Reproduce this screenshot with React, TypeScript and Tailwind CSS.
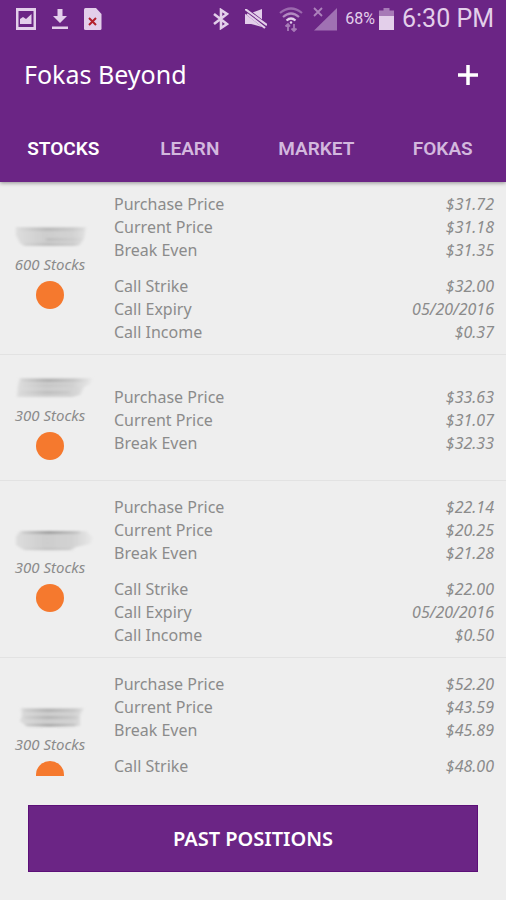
import { useState } from "react";

type Position = {
  stocks: number;
  rows: [string, string][][];
};

const positions: Position[] = [
  {
    stocks: 600,
    rows: [
      [["Purchase Price", "$31.72"], ["Current Price", "$31.18"], ["Break Even", "$31.35"]],
      [["Call Strike", "$32.00"], ["Call Expiry", "05/20/2016"], ["Call Income", "$0.37"]],
    ],
  },
  {
    stocks: 300,
    rows: [
      [["Purchase Price", "$33.63"], ["Current Price", "$31.07"], ["Break Even", "$32.33"]],
    ],
  },
  {
    stocks: 300,
    rows: [
      [["Purchase Price", "$22.14"], ["Current Price", "$20.25"], ["Break Even", "$21.28"]],
      [["Call Strike", "$22.00"], ["Call Expiry", "05/20/2016"], ["Call Income", "$0.50"]],
    ],
  },
  {
    stocks: 300,
    rows: [
      [["Purchase Price", "$52.20"], ["Current Price", "$43.59"], ["Break Even", "$45.89"]],
      [["Call Strike", "$48.00"]],
    ],
  },
];

const tabs = ["STOCKS", "LEARN", "MARKET", "FOKAS"];

// smeared ticker names, one shape per position
const smudges = [
  { shape: "M16 0H86L84 11L80 18L74 19H24L20 16L16 8Z", lines: [[20, 84, 2, 0.16], [46, 84, 12, 0.12], [24, 78, 17, 0.12]] },
  { shape: "M20 0H92L90 6L84 9L80 17L72 19H17L18 8Z", lines: [[22, 88, 2, 0.25], [24, 74, 7, 0.06], [18, 70, 14, 0.12]] },
  { shape: "M20 1H86L93 8L90 14L76 17L70 20H24L16 15V7Z", lines: [[22, 80, 2, 0.4], [24, 74, 19, 0.1]] },
  { shape: "M21 1H84L80 8V19H26L20 14L22 8Z", lines: [[24, 80, 3, 0.22], [24, 78, 10, 0.2], [26, 76, 18, 0.35]] },
];

function Smudge({ index }: { index: number }) {
  const s = smudges[index];
  return (
    <svg width="100" height="20" viewBox="0 0 100 20" className="overflow-visible" aria-hidden="true">
      <defs>
        <filter id={`soft${index}`} x="-20%" y="-50%" width="140%" height="200%">
          <feGaussianBlur stdDeviation="1.8 0.9" />
        </filter>
        <linearGradient id={`fade${index}`} gradientUnits="userSpaceOnUse" x1="14" x2="93" y1="0" y2="0">
          <stop offset="0" stopColor="#dedede" />
          <stop offset="0.4" stopColor="#cdcdcd" />
          <stop offset="0.75" stopColor="#d3d3d3" />
          <stop offset="1" stopColor="#e9e9e9" />
        </linearGradient>
        <linearGradient id={`line${index}`} gradientUnits="userSpaceOnUse" x1="16" x2="90" y1="0" y2="0">
          <stop offset="0" stopColor="#555" stopOpacity="0" />
          <stop offset="0.45" stopColor="#555" />
          <stop offset="1" stopColor="#555" stopOpacity="0" />
        </linearGradient>
      </defs>
      <g filter={`url(#soft${index})`}>
        <path d={s.shape} fill={`url(#fade${index})`} />
        {s.lines.map(([x1, x2, y, o]) => (
          <rect key={y} x={x1} y={y - 1} width={x2 - x1} height="3" fill={`url(#line${index})`} opacity={o} />
        ))}
      </g>
    </svg>
  );
}

function StatusBar() {
  return (
    <div className="h-[38px] flex items-center justify-between pl-4 pr-3 text-[#e3cfea] font-[Roboto,sans-serif]">
      <div className="flex items-center gap-4">
        <svg width="20" height="22" viewBox="0 0 20 22" fill="currentColor">
          <path fillRule="evenodd" d="M0 0H20V22H0ZM2.500 3V19H17.500V3Z" />
          <path d="M4 16V11L7 9L10 11L15.500 6V16Z" />
        </svg>
        <svg width="16" height="20" viewBox="0 0 16 20" fill="currentColor">
          <path d="M5.500 0H10.500V7H15L8 14L1 7H5.500ZM0 17.500H16V20H0Z" />
        </svg>
        <svg width="18" height="22" viewBox="0 0 18 22">
          <path d="M1.500 0H12L17.500 6V20.500Q17.500 22 16 22H1.500Q0 22 0 20.500V1.500Q0 0 1.500 0Z" fill="currentColor" />
          <path d="M5 10L12 17M12 10L5 17" stroke="#b3202c" strokeWidth="2" />
        </svg>
      </div>
      <div className="flex items-center">
        <svg width="16" height="22" viewBox="0 0 16 22" fill="none" stroke="currentColor" strokeWidth="2.6">
          <path d="M1 6L14 16L8 20V2L14 6L1 16" />
        </svg>
        <svg width="22" height="20" viewBox="0 0 22 20" className="ml-4">
          <path d="M0 4H6L17 0V18L6 15H0Z" fill="currentColor" />
          <path d="M0 1L22 18" stroke="#6b2585" strokeWidth="6" />
          <path d="M0 0L22 16M2 5L20 19" stroke="currentColor" strokeWidth="2.2" />
        </svg>
        <svg width="24" height="25" viewBox="0 0 24 25" fill="none" stroke="currentColor" strokeWidth="2.2" className="ml-3">
          <path d="M1 6Q12 -3 23 6" opacity=".4" />
          <path d="M4 10Q12 3 20 10" opacity=".6" />
          <path d="M7.500 13.500Q12 9.500 16.500 13.500" />
          <circle cx="12" cy="15.500" r="1.200" fill="currentColor" stroke="none" />
          <path d="M9 24V17M6.500 19.500L9 17L11 19.500M15 17V24M12.500 21.500L15 24L17.500 21.500" strokeWidth="1.800" opacity=".5" />
        </svg>
        <svg width="24" height="24" viewBox="0 0 24 24" className="ml-2.5">
          <path d="M24 1V23.500H1Z" fill="currentColor" opacity=".45" />
          <path d="M1 1L9 9M9 1L1 9" stroke="currentColor" strokeWidth="1.800" opacity=".55" />
        </svg>
        <span className="ml-2 text-base">68%</span>
        <svg width="15" height="22" viewBox="0 0 15 22" fill="currentColor" className="ml-1">
          <path d="M4.500 0H10.500V2.500H15V8H0V2.500H4.500Z" opacity=".5" />
          <path d="M0 8H15V22H0Z" />
        </svg>
        <span className="ml-2 text-[25px]">6:30 PM</span>
      </div>
    </div>
  );
}

export default function App() {
  const [active, setActive] = useState("STOCKS");

  return (
    <div className="h-screen flex flex-col bg-[#eeeeee] font-['Noto_Sans',sans-serif]">
      <header className="relative z-10 shrink-0 bg-[#6b2585] shadow-[0_1px_4px_rgba(0,0,0,0.4)]">
        <StatusBar />
        <div className="h-[74px] flex items-center justify-between px-6">
          <h1 className="text-[25px] text-white">Fokas Beyond</h1>
          <button aria-label="Add position" className="p-1">
            <svg width="20" height="20" viewBox="0 0 20 20" stroke="#fff" strokeWidth="3.500">
              <path d="M10 0V20M0 10H20" />
            </svg>
          </button>
        </div>
        <nav className="h-[70px] grid grid-cols-4 pt-1">
          {tabs.map((tab) => (
            <button
              key={tab}
              onClick={() => setActive(tab)}
              className={`font-[Roboto,sans-serif] text-[19px] font-semibold ${active === tab ? "text-white" : "text-[#d3b8de]"}`}
            >
              {tab}
            </button>
          ))}
        </nav>
      </header>

      <main className="flex-1 min-h-0 overflow-y-auto [scrollbar-width:none]">
        <ul className="-mt-1">
          {positions.map((p, i) => (
            <li key={i} className="flex items-center border-b border-[#e2e2e2] text-[#8b8b8b] text-base leading-[23px]">
              <div className="w-[100px] shrink-0 flex flex-col items-center gap-1.5 pt-[23px] pb-5">
                <Smudge index={i} />
                <p className="italic text-[15px] leading-[22px]">{p.stocks} Stocks</p>
                <span className="size-7 rounded-full bg-[#f5792e]"></span>
              </div>
              <div className="flex-1 flex flex-col gap-[13px] pl-[14px] pr-3 pt-[15px] pb-[10px]">
                {p.rows.map((group, g) => (
                  <dl key={g} className="min-h-[69px]">
                    {group.map(([label, value]) => (
                      <div key={label} className="flex justify-between">
                        <dt>{label}</dt>
                        <dd className="italic">{value}</dd>
                      </div>
                    ))}
                  </dl>
                ))}
              </div>
            </li>
          ))}
        </ul>
      </main>

      <footer className="shrink-0 px-7 pt-[29px] pb-7">
        <button className="w-full h-[67px] bg-[#6b2585] border border-[#5c0f78] text-white text-xl font-semibold">
          PAST POSITIONS
        </button>
      </footer>
    </div>
  );
}
